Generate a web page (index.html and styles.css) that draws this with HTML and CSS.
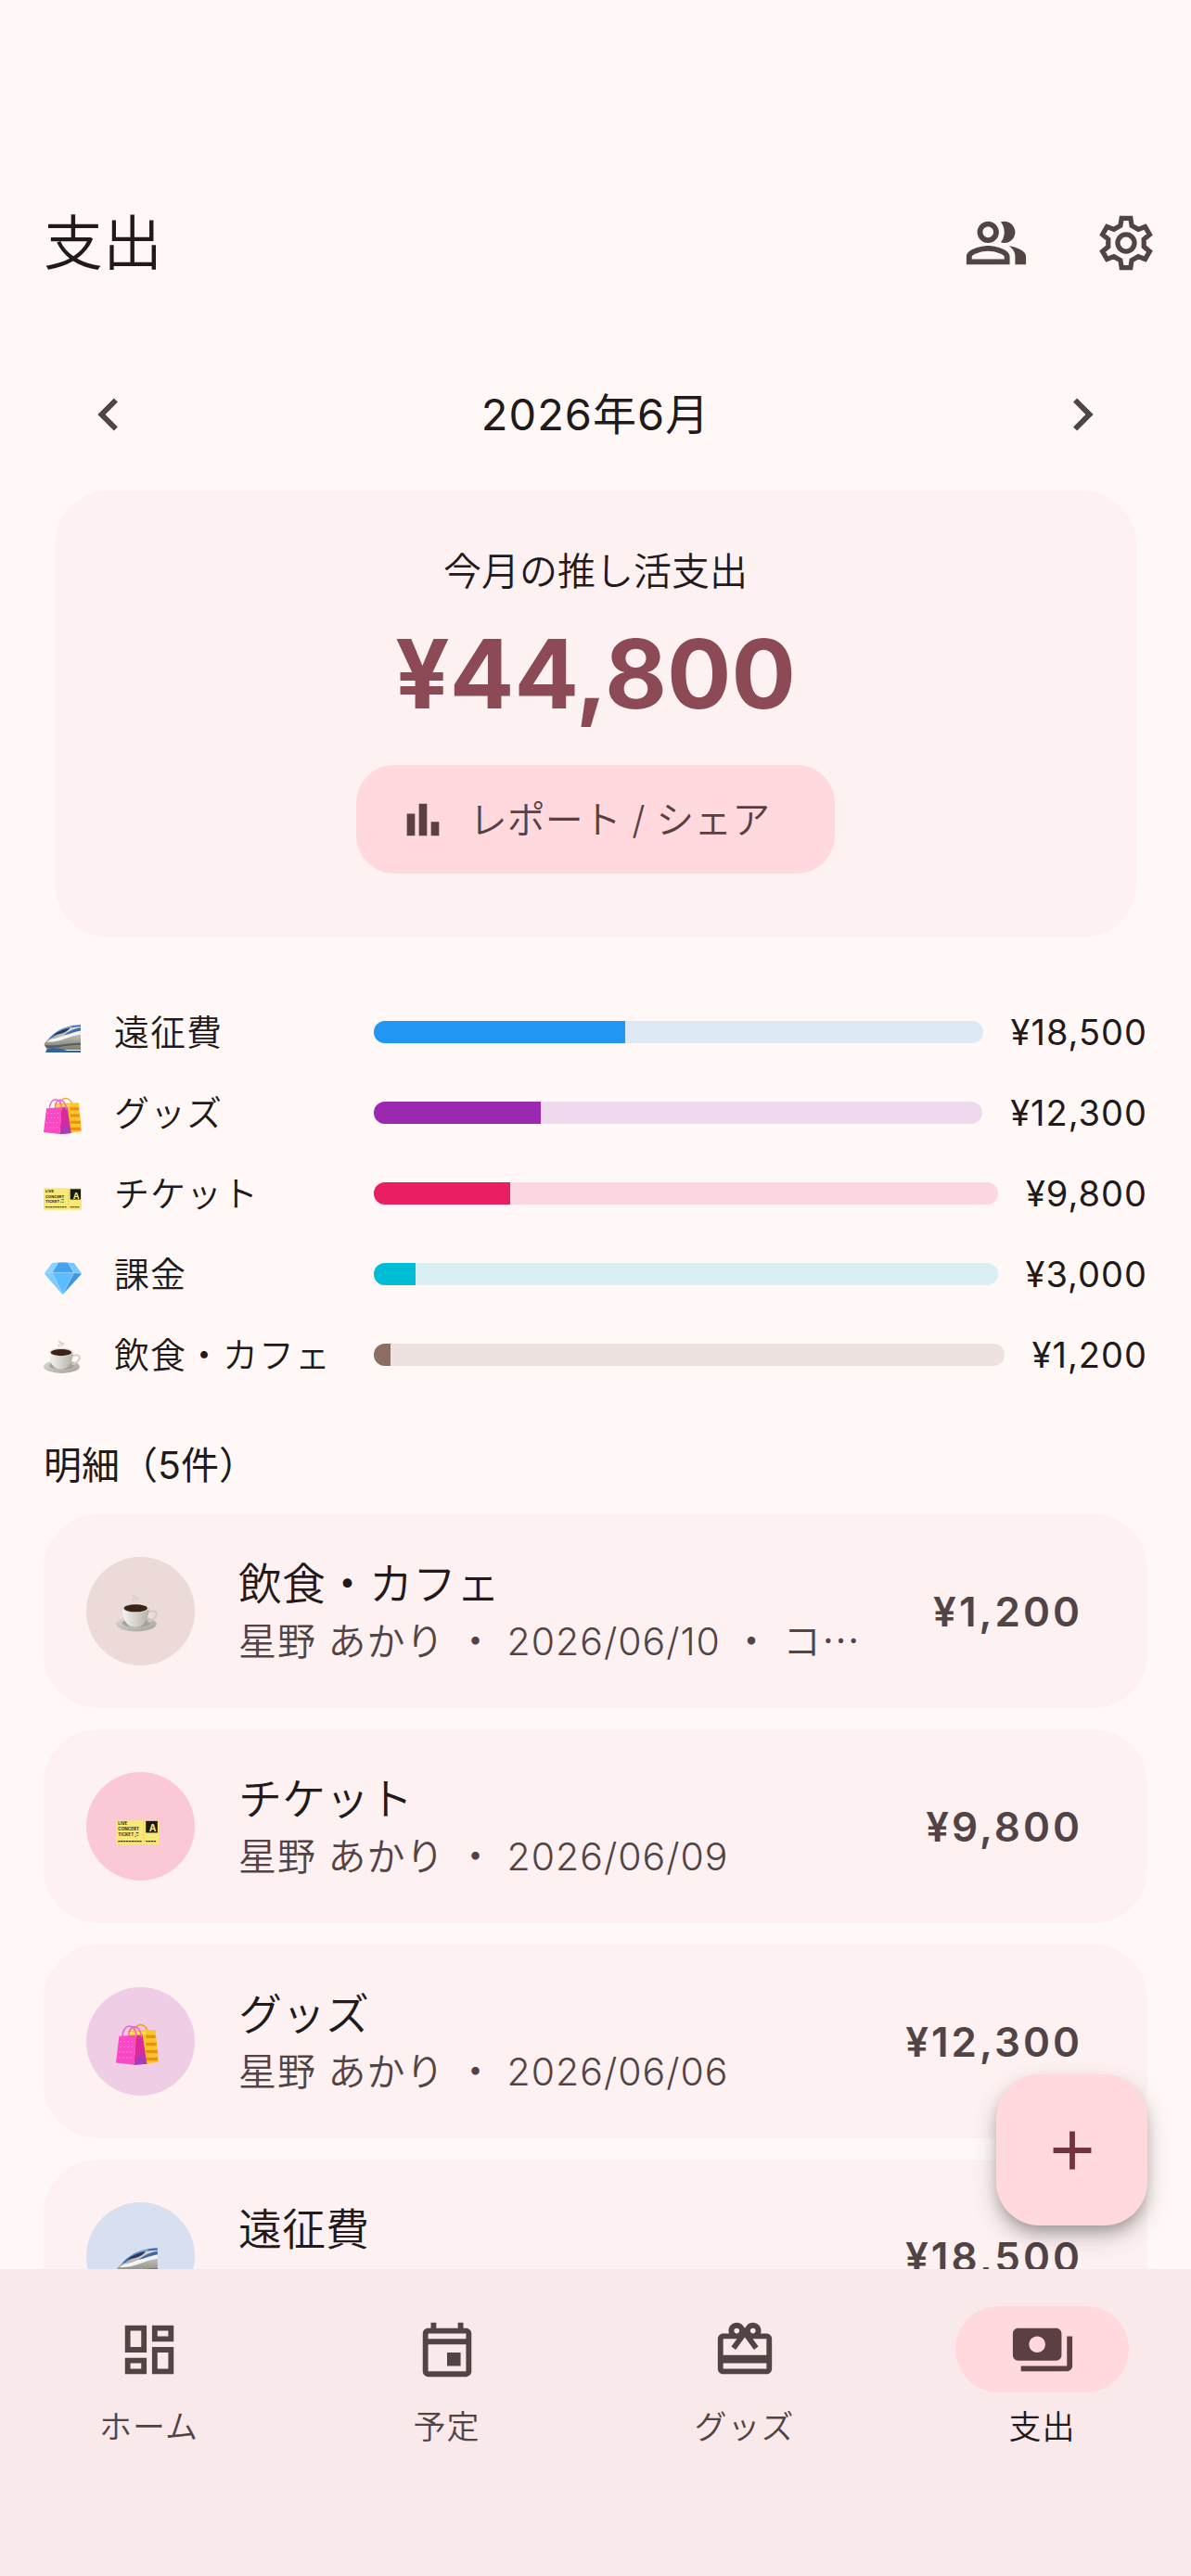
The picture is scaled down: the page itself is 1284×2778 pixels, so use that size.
FILE: index.html
```
<!DOCTYPE html>
<html lang="ja">

<head>
  <meta charset="UTF-8" />
  <meta name="viewport" content="width=device-width, initial-scale=1.0" />
  <title>支出</title>
  <link rel="stylesheet" href="styles.css">
</head>

<body>

  <!-- category pictures, reused below -->
  <svg class="sprites" aria-hidden="true">
    <defs>
      <linearGradient id="trainBody" x1="0" y1="0" x2="0" y2="1">
        <stop offset="0" stop-color="#e4e4e1" />
        <stop offset="1" stop-color="#7c7c76" />
      </linearGradient>
      <linearGradient id="saucer" x1="0" y1="0" x2="1" y2="1">
        <stop offset="0" stop-color="#dedbd5" />
        <stop offset="1" stop-color="#a5a199" />
      </linearGradient>
      <linearGradient id="cup" x1="0" y1="0" x2="1" y2="0">
        <stop offset="0" stop-color="#f4f3f0" />
        <stop offset="1" stop-color="#b5b1aa" />
      </linearGradient>
    </defs>

    <symbol id="pic-train" viewBox="0 0 40 40">
      <path fill="url(#trainBody)" d="M39 10C27 10 14 15 5 24c-3 3-5 5-4 7l3 4h35z" />
      <path fill="#3f6fb8" d="M39 9c-10 0-20 3-29 10l-5 5c6-2 9-5 14-9 6-3 13-4 20-4z" />
      <path fill="#7fc0ee" d="M30 10c-7 2-12 4-16 7l7-2 9-4z" />
      <path fill="#2b3a5c" d="M28 12c-7 1-13 4-17 8l8-2c4-1 7-3 9-6z" />
      <path fill="#f4f4f2" d="M39 15c-12 1-19 7-31 9l-5 3c14 1 22-6 36-8z" />
      <path fill="#456aa6" d="M39 12c-8 1-12 4-18 8 6-1 12-4 18-5z" />
      <path fill="#5c5c57" d="M2 30c10 2 22-2 37-2v2c-14 0-25 4-36 3z" />
      <path fill="#2f62a8" d="M3 35c3-2 9-2 14-1l8 2h14v2H2z" />
    </symbol>

    <symbol id="pic-bags" viewBox="0 0 40 40">
      <path fill="none" stroke="#f3a51f" stroke-width="1.4" d="M17 9c0-10 11-10 13-1" />
      <path fill="#f9c62b" d="M11 7l26-1 3 30-12 2z" />
      <path fill="#f08c13" d="M28 11h9v3h-9zM28 18h10v3H28zM28 25h11v3H28zM28 32h11v3H28z" />
      <path fill="#ffe557" d="M12 8h16v2H12z" />
      <path fill="#fb48c4" d="M3 12l16-1-2 28-17-2z" />
      <path fill="#d72a9c" d="M19 11h6l4 27-12 1z" />
      <path fill="#a03dbb" d="M23 28l6 10-12 1z" />
      <path fill="none" stroke="#fb5cca" stroke-width="1.4" d="M6 14c0-15 13-15 13-1M12 12c0-12 11-12 12 1" />
      <g fill="none" stroke="#ff9be2" stroke-width="1" stroke-dasharray="1 2.5">
        <path d="M4 17h13M4 22h13M3 27h14M3 32h14" />
      </g>
    </symbol>

    <symbol id="pic-gem" viewBox="0 0 40 40">
      <path fill="#58b8fb" d="M9 5l11-1 12 1 8 11-20 22L1 16z" />
      <path fill="#8fd2fd" d="M9 5h6L9 15l-8 1z" />
      <path fill="#46a2ec" d="M15 5h11l6 10H9z" />
      <path fill="#7cc8fd" d="M26 5h6l8 11-8-1z" />
      <path fill="#7fcbff" d="M1 16l8-1 11 23z" />
      <path fill="#5dbcff" d="M9 15h23L20 38z" />
      <path fill="#3a97e6" d="M32 15l8 1-20 22z" />
      <path fill="none" stroke="#b6e4ff" stroke-width="0.6" d="M1 16l8-1h23l8 1M15 5L9 15l11 23 12-23-6-10" />
    </symbol>

    <symbol id="pic-coffee" viewBox="0 0 40 40">
      <path fill="none" stroke="#d5cfcd" stroke-width="1.2" d="M15 3c4-2 2 3 6 1M17 8c-4-2 3-2 0-5M19 8c-1-3 3-1 2-4" />
      <ellipse cx="19" cy="29" rx="19" ry="7" fill="url(#saucer)" />
      <ellipse cx="19" cy="28" rx="13" ry="4" fill="#a5a19a" />
      <path fill="none" stroke="#cfccc6" stroke-width="1.8" d="M30 18c9-4 12 4 0 9" />
      <path fill="url(#cup)" d="M6 14c0 9 3 18 12 18s13-9 13-18z" />
      <ellipse cx="18.500" cy="14" rx="12.500" ry="4.500" fill="#e0ddd8" />
      <ellipse cx="18.500" cy="14.200" rx="11" ry="3.500" fill="#3d2217" />
    </symbol>
  </svg>

  <header class="app-bar">
    <h1>支出</h1>
    <button class="icon-button" type="button" aria-label="メンバー">
      <svg class="icon" viewBox="0 0 24 24"><path d="M16.67 13.13C18.04 14.06 19 15.32 19 17v3h4v-3c0-2.18-3.57-3.47-6.33-3.87zM15 12c2.21 0 4-1.79 4-4s-1.79-4-4-4c-.47 0-.91.1-1.33.24C14.5 5.27 15 6.58 15 8s-.5 2.73-1.33 3.76c.42.14.86.24 1.33.24zM9 12c2.21 0 4-1.79 4-4s-1.79-4-4-4-4 1.79-4 4 1.79 4 4 4zm0-6c1.1 0 2 .9 2 2s-.9 2-2 2-2-.9-2-2 .9-2 2-2zM9 13c-2.67 0-8 1.34-8 4v3h16v-3c0-2.66-5.33-4-8-4zm6 5H3v-.99C3.2 16.29 6.3 15 9 15s5.8 1.29 6 2v1z" /></svg>
    </button>
    <button class="icon-button" type="button" aria-label="設定">
      <svg class="icon outline" viewBox="0 0 24 24">
        <path d="M10.35 2.9h3.3l.45 2.7 2.39 1.38 2.56-.96 1.66 2.86-2.12 1.74v2.76l2.12 1.74-1.66 2.86-2.56-.96-2.39 1.38-.45 2.7h-3.3l-.45-2.7-2.39-1.38-2.56.96-1.66-2.86 2.12-1.74v-2.76L3.29 8.88l1.66-2.86 2.56.96L9.9 5.6z" />
        <circle cx="12" cy="12" r="3.1" />
      </svg>
    </button>
  </header>

  <div class="content">
    <main class="scroll">

      <div class="month">
        <button class="icon-button" type="button" aria-label="前の月">
          <svg class="icon" viewBox="0 0 24 24"><path d="M15.41 7.41L14 6l-6 6 6 6 1.41-1.41L10.83 12z" /></svg>
        </button>
        <h2>2026年6月</h2>
        <button class="icon-button" type="button" aria-label="次の月">
          <svg class="icon" viewBox="0 0 24 24"><path d="M10 6L8.59 7.41 13.17 12l-4.58 4.59L10 18l6-6z" /></svg>
        </button>
      </div>

      <section class="summary">
        <p class="summary-label">今月の推し活支出</p>
        <p class="summary-total">¥44,800</p>
        <button class="report-button" type="button">
          <svg class="icon-small" viewBox="0 0 24 24"><path d="M4 9h4v11H4zM10 4h4v16h-4zM16 13h4v7h-4z" /></svg>
          レポート / シェア
        </button>
      </section>

      <ul class="breakdown">
        <li>
          <svg class="pic"><use href="#pic-train" /></svg>
          <span class="name">遠征費</span>
          <div class="bar blue"><div class="fill" style="width: 41.3%"></div></div>
          <span class="price">¥18,500</span>
        </li>
        <li>
          <svg class="pic"><use href="#pic-bags" /></svg>
          <span class="name">グッズ</span>
          <div class="bar purple"><div class="fill" style="width: 27.5%"></div></div>
          <span class="price">¥12,300</span>
        </li>
        <li>
          <svg class="pic ticket" viewBox="0 0 40 40">
            <path fill="#f8e878" d="M0 11h25l1 1 1-1h13v23H27l-1-1-1 1H0z" />
            <path fill="#1b1a12" d="M28 12h11v11H28z" />
            <path stroke="#e9c94b" stroke-dasharray="1.5 1.5" d="M26 12v21" />
            <text x="2" y="16">LIVE</text>
            <text x="2" y="21">CONCERT</text>
            <text x="2" y="26">TICKET ♫</text>
            <path stroke="#2b2817" stroke-dasharray="2 .5" d="M2 31h22M28 31h10" />
            <text class="zone" x="31" y="22">A</text>
          </svg>
          <span class="name">チケット</span>
          <div class="bar pink"><div class="fill" style="width: 21.9%"></div></div>
          <span class="price">¥9,800</span>
        </li>
        <li>
          <svg class="pic"><use href="#pic-gem" /></svg>
          <span class="name">課金</span>
          <div class="bar teal"><div class="fill" style="width: 6.7%"></div></div>
          <span class="price">¥3,000</span>
        </li>
        <li>
          <svg class="pic"><use href="#pic-coffee" /></svg>
          <span class="name">飲食・カフェ</span>
          <div class="bar brown"><div class="fill" style="width: 2.7%"></div></div>
          <span class="price">¥1,200</span>
        </li>
      </ul>

      <h3>明細（5件）</h3>

      <ul class="records">
        <li>
          <div class="avatar brown"><svg class="pic"><use href="#pic-coffee" /></svg></div>
          <div class="text">
            <p class="title">飲食・カフェ</p>
            <p class="sub">星野 あかり ・ 2026/06/10 ・ コ<span class="dots">…</span></p>
          </div>
          <span class="amount">¥1,200</span>
        </li>
        <li>
          <div class="avatar pink">
            <svg class="pic ticket" viewBox="0 0 40 40">
              <path fill="#f8e878" d="M0 11h25l1 1 1-1h13v23H27l-1-1-1 1H0z" />
              <path fill="#1b1a12" d="M28 12h11v11H28z" />
              <path stroke="#e9c94b" stroke-dasharray="1.5 1.5" d="M26 12v21" />
              <text x="2" y="16">LIVE</text>
              <text x="2" y="21">CONCERT</text>
              <text x="2" y="26">TICKET ♫</text>
              <path stroke="#2b2817" stroke-dasharray="2 .5" d="M2 31h22M28 31h10" />
              <text class="zone" x="31" y="22">A</text>
            </svg>
          </div>
          <div class="text">
            <p class="title">チケット</p>
            <p class="sub">星野 あかり ・ 2026/06/09</p>
          </div>
          <span class="amount">¥9,800</span>
        </li>
        <li>
          <div class="avatar purple"><svg class="pic"><use href="#pic-bags" /></svg></div>
          <div class="text">
            <p class="title">グッズ</p>
            <p class="sub">星野 あかり ・ 2026/06/06</p>
          </div>
          <span class="amount">¥12,300</span>
        </li>
        <li>
          <div class="avatar blue"><svg class="pic"><use href="#pic-train" /></svg></div>
          <div class="text">
            <p class="title">遠征費</p>
            <p class="sub">&nbsp;</p>
          </div>
          <span class="amount">¥18,500</span>
        </li>
      </ul>
    </main>

    <button class="fab" type="button" aria-label="支出を追加">
      <svg class="icon" viewBox="0 0 24 24"><path d="M19 13h-6v6h-2v-6H5v-2h6V5h2v6h6z" /></svg>
    </button>
  </div>

  <nav class="tabs">
    <a href="#home">
      <span class="pill"><svg class="icon" viewBox="0 0 24 24"><path d="M19 5v2h-4V5h4M9 5v6H5V5h4m10 8v6h-4v-6h4M9 17v2H5v-2h4M21 3h-8v6h8V3zM11 3H3v10h8V3zm10 8h-8v10h8V11zm-10 4H3v6h8v-6z" /></svg></span>
      ホーム
    </a>
    <a href="#schedule">
      <span class="pill"><svg class="icon" viewBox="0 0 24 24"><path d="M19 4h-1V2h-2v2H8V2H6v2H5c-1.11 0-1.99.9-1.99 2L3 20c0 1.1.89 2 2 2h14c1.1 0 2-.9 2-2V6c0-1.1-.9-2-2-2zm0 16H5V10h14v10zm0-12H5V6h14v2zm-2 5h-5v5h5v-5z" /></svg></span>
      予定
    </a>
    <a href="#goods">
      <span class="pill"><svg class="icon" viewBox="0 0 24 24"><path d="M20 6h-2.18c.11-.31.18-.65.18-1 0-1.66-1.34-3-3-3-1.05 0-1.96.54-2.5 1.35l-.5.67-.5-.68C10.96 2.54 10.05 2 9 2 7.34 2 6 3.34 6 5c0 .35.07.69.18 1H4c-1.11 0-1.99.89-1.99 2L2 19c0 1.11.89 2 2 2h16c1.11 0 2-.89 2-2V8c0-1.11-.89-2-2-2zm-5-2c.55 0 1 .45 1 1s-.45 1-1 1-1-.45-1-1 .45-1 1-1zM9 4c.55 0 1 .45 1 1s-.45 1-1 1-1-.45-1-1 .45-1 1-1zm11 15H4v-2h16v2zm0-5H4V8h5.08L7 10.83 8.62 12 11 8.76l1-1.36 1 1.36L15.38 12 17 10.83 14.92 8H20v6z" /></svg></span>
      グッズ
    </a>
    <a href="#expenses" class="active" aria-current="page">
      <span class="pill"><svg class="icon" viewBox="0 0 24 24"><path d="M19 14V6c0-1.1-.9-2-2-2H3c-1.1 0-2 .9-2 2v8c0 1.1.9 2 2 2h14c1.1 0 2-.9 2-2zm-9-1c-1.66 0-3-1.34-3-3s1.34-3 3-3 3 1.34 3 3-1.34 3-3 3zm13-6v11c0 1.1-.9 2-2 2H4v-2h17V7h2z" /></svg></span>
      支出
    </a>
  </nav>

</body>
</html>
```
FILE: styles.css
```
* {
  box-sizing: border-box;
  margin: 0;
  padding: 0;
}

body {
  display: flex;
  flex-direction: column;
  height: 100vh;
  background-color: #fff8f6;
  color: #22191a;
  font-family: Inter, "Noto Sans CJK JP", sans-serif;
  font-weight: 350;
}

button {
  border: none;
  background: none;
  color: inherit;
  font: inherit;
  cursor: pointer;
}

ul {
  list-style: none;
}

.sprites {
  position: absolute;
  width: 0;
  height: 0;
}

.icon {
  width: 70px;
  height: 70px;
  fill: currentColor;
}

.icon.outline {
  fill: none;
  stroke: currentColor;
  stroke-width: 1.8;
}

.icon-small {
  width: 52px;
  height: 52px;
  fill: currentColor;
}

.icon-button {
  display: flex;
  align-items: center;
  justify-content: center;
  width: 140px;
  height: 140px;
  color: #524344;
}

/* top bar */

.app-bar {
  display: flex;
  align-items: center;
  height: 355px;
  padding: 169px 0 0 47px;
}

.app-bar h1 {
  flex: 1;
  font-size: 64px;
  font-weight: 350;
  line-height: 80px;
}

/* scrolling area */

.content {
  position: relative;
  flex: 1;
  min-height: 0;
}

.scroll {
  height: 100%;
  padding: 22px 47px 0;
  overflow-y: auto;
  scrollbar-width: none;
}

.month {
  display: flex;
  align-items: center;
  justify-content: space-between;
}

.month h2 {
  font-size: 47px;
  font-weight: 400;
  letter-spacing: 1px;
  line-height: 70px;
}

.summary {
  display: flex;
  flex-direction: column;
  align-items: center;
  margin: 12px 12px 0;
  padding: 58px 0 69px;
  border-radius: 58px;
  background-color: #fdf1f1;
}

.summary-label {
  font-size: 41px;
  line-height: 58px;
}

.summary-total {
  margin: 18px 0 34px;
  color: #8c4a56;
  font-size: 103px;
  font-weight: 700;
  line-height: 128px;
}

.report-button {
  display: flex;
  align-items: center;
  gap: 24px;
  height: 117px;
  padding: 0 70px 0 46px;
  border-radius: 41px;
  background-color: #ffd9dd;
  color: #5c3f43;
  font-size: 41px;
  line-height: 58px;
}

/* category bars */

.breakdown {
  display: flex;
  flex-direction: column;
  gap: 29px;
  margin-top: 73px;
}

.breakdown li {
  display: flex;
  align-items: center;
  height: 58px;
  font-size: 38px;
  letter-spacing: 1px;
  line-height: 58px;
}

.pic {
  width: 41px;
  height: 41px;
  margin-top: 6px;
}

.ticket text {
  fill: #2b2817;
  font-size: 4px;
  font-weight: 700;
  letter-spacing: 0;
}

.ticket .zone {
  fill: #f8e878;
  font-size: 9px;
}

.name {
  width: 280px;
  margin-left: 35px;
}

.bar {
  flex: 1;
  height: 24px;
  margin-right: 30px;
  border-radius: 12px;
  overflow: hidden;
}

.fill {
  height: 100%;
}

.price {
  font-weight: 400;
}

.bar.blue { background-color: #dde9f5; }
.bar.purple { background-color: #efd9ec; }
.bar.pink { background-color: #fcd6e0; }
.bar.teal { background-color: #d9eff1; }
.bar.brown { background-color: #ede2e0; }

.blue .fill { background-color: #2196f3; }
.purple .fill { background-color: #9c27b0; }
.pink .fill { background-color: #e91e63; }
.teal .fill { background-color: #00bcd4; }
.brown .fill { background-color: #8d6e63; }

/* records */

h3 {
  margin: 61px 0 24px;
  font-size: 41px;
  font-weight: 400;
  line-height: 58px;
}

.records {
  display: flex;
  flex-direction: column;
  gap: 23px;
}

.records li {
  display: flex;
  align-items: center;
  padding: 46px 70px 46px 46px;
  border-radius: 58px;
  background-color: #fdf1f1;
}

.avatar {
  display: flex;
  align-items: center;
  justify-content: center;
  width: 117px;
  height: 117px;
  margin-right: 47px;
  padding-right: 8px;
  border-radius: 50%;
}

.avatar .pic {
  width: 46px;
  height: 46px;
}

.avatar.blue { background-color: #d6e0f1; }
.avatar.purple { background-color: #eecde5; }
.avatar.pink { background-color: #fac9d5; }
.avatar.brown { background-color: #ebdad8; }

.text {
  flex: 1;
  min-width: 0;
  margin: -6px 0;
}

.title {
  font-size: 47px;
  line-height: 64px;
}

.sub {
  color: #524344;
  font-size: 41px;
  letter-spacing: 1px;
  line-height: 60px;
  white-space: nowrap;
}

.dots {
  font-family: "Noto Sans CJK JP", sans-serif;
  line-height: 1;
}

.amount {
  color: #524344;
  font-size: 44px;
  font-weight: 600;
  letter-spacing: 3px;
  line-height: 58px;
}

.fab {
  position: absolute;
  right: 47px;
  bottom: 47px;
  display: flex;
  align-items: center;
  justify-content: center;
  width: 163px;
  height: 163px;
  border-radius: 47px;
  background-color: #ffd9de;
  color: #72333f;
  box-shadow: 0 9px 15px -3px rgba(0, 0, 0, 0.25), 0 12px 28px rgba(0, 0, 0, 0.18);
}

/* bottom navigation */

.tabs {
  display: flex;
  height: 331px;
  padding-top: 40px;
  background-color: #fae9ea;
}

.tabs a {
  display: flex;
  flex: 1;
  flex-direction: column;
  align-items: center;
  gap: 12px;
  color: #524344;
  font-size: 35px;
  letter-spacing: 1px;
  line-height: 50px;
  text-decoration: none;
}

.pill {
  display: flex;
  align-items: center;
  justify-content: center;
  width: 187px;
  height: 93px;
  border-radius: 47px;
}

.tabs .active {
  color: #22191a;
}

.active .pill {
  background-color: #ffd9dd;
  color: #5c3f43;
}
```
